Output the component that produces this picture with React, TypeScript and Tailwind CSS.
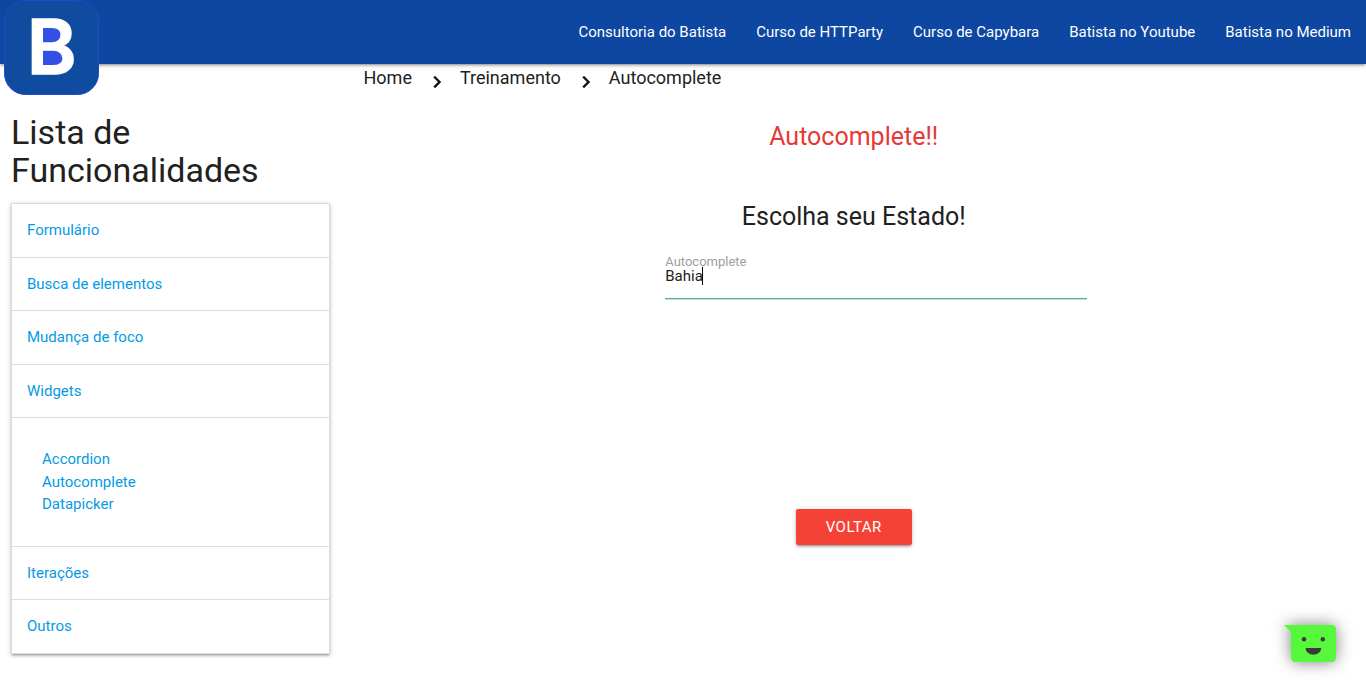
const navLinks = [
  "Consultoria do Batista",
  "Curso de HTTParty",
  "Curso de Capybara",
  "Batista no Youtube",
  "Batista no Medium",
];

const crumbs = ["Home", "Treinamento", "Autocomplete"];

type Section = { title: string; items?: string[] };

const sections: Section[] = [
  { title: "Formulário" },
  { title: "Busca de elementos" },
  { title: "Mudança de foco" },
  { title: "Widgets", items: ["Accordion", "Autocomplete", "Datapicker"] },
  { title: "Iterações" },
  { title: "Outros" },
];

function Logo() {
  return (
    <svg width="96" height="96" viewBox="0 0 96 96" role="img" aria-label="Batista">
      <rect x="0.5" y="0.5" width="94" height="94" rx="21" fill="#0f4c9f" stroke="#2448c8" strokeWidth="1" />
      <rect x="36" y="26" width="26" height="42" fill="#3350e4" />
      <text
        x="23"
        y="74"
        fontFamily="Inter, sans-serif"
        fontWeight="600"
        fontSize="75"
        fill="#ffffff"
        stroke="#ffffff"
        strokeWidth="1.500"
      >
        B
      </text>
    </svg>
  );
}

function Chevron() {
  return (
    <svg className="mt-1.5 mr-[11px] ml-[13px] shrink-0" width="24" height="24" viewBox="0 0 24 24" aria-hidden="true">
      <path d="M10 6L8.59 7.41 13.17 12l-4.58 4.59L10 18l6-6z" fill="#111" stroke="#111" strokeWidth="0.4" />
    </svg>
  );
}

function Header() {
  return (
    <header className="relative z-10 h-16 bg-[#0d47a1] shadow-[0_2px_2px_0_rgba(0,0,0,0.14),0_3px_1px_-2px_rgba(0,0,0,0.12),0_1px_5px_0_rgba(0,0,0,0.2)]">
      <a href="#" className="absolute top-0 left-1">
        <Logo />
      </a>
      <nav className="flex h-full items-center justify-end">
        {navLinks.map((link) => (
          <a key={link} href="#" className="px-[15px] text-white">
            {link}
          </a>
        ))}
      </nav>
    </header>
  );
}

function Sidebar() {
  return (
    <aside className="w-1/4 pt-[49px] pr-3 pl-[11px]">
      <h4 className="text-[34px] leading-[38px]">Lista de Funcionalidades</h4>
      <ul className="mt-[14px] border border-b-0 border-[#ddd] shadow-[0_2px_2px_0_rgba(0,0,0,0.14),0_3px_1px_-2px_rgba(0,0,0,0.12),0_1px_5px_0_rgba(0,0,0,0.2)]">
        {sections.map((section) => (
          <li key={section.title} className="text-[#039be5]">
            <div className="border-b border-[#ddd] p-[15px]">
              <a href="#">{section.title}</a>
            </div>
            {section.items && (
              <ul className="border-b border-[#ddd] p-[30px]">
                {section.items.map((item) => (
                  <li key={item}>
                    <a href="#">{item}</a>
                  </li>
                ))}
              </ul>
            )}
          </li>
        ))}
      </ul>
    </aside>
  );
}

function StateField() {
  return (
    <div className="relative mt-[23px] ml-[31.6%] flex w-[41.2%] flex-col">
      <label htmlFor="estado" className="text-[13px] leading-4 text-[#9e9e9e]">
        Autocomplete
      </label>
      <input
        id="estado"
        type="text"
        autoComplete="off"
        defaultValue="Bahia"
        className="-mt-1 h-[33px] border-b border-[#5fa8a0] bg-transparent pb-[13px] text-[15px] caret-transparent shadow-[0_1px_0_0_#c5e0dc] outline-none"
      />
      <span aria-hidden="true" className="absolute top-[13px] left-[37px] h-[18px] w-px bg-black" />
    </div>
  );
}

function Chat() {
  return (
    <button type="button" aria-label="Chat" className="fixed right-6 bottom-6">
      <svg width="64" height="54" viewBox="0 0 64 54" className="overflow-visible drop-shadow-[0_0_8px_rgba(0,0,0,0.5)]">
        <path d="M6 9H53Q58 9 58 14V41Q58 46 53 46H18Q13 46 13 41V16Z" fill="#57f73c" />
        <circle cx="26" cy="23.300" r="2.200" fill="#3a3a3a" />
        <circle cx="44.800" cy="23.300" r="2.200" fill="#3a3a3a" />
        <path d="M27.600 32H43.200A7.800 6.800 0 0 1 27.600 32Z" fill="#3a3a3a" />
      </svg>
    </button>
  );
}

export default function App() {
  return (
    <div className="min-h-screen bg-white font-[Roboto,sans-serif] text-[15px] leading-normal text-[#212121]">
      <Header />
      <div className="flex">
        <Sidebar />
        <main className="w-3/4">
          <nav aria-label="breadcrumb" className="flex h-[30px] items-start pl-[22px] text-[18px] leading-7">
            {crumbs.map((crumb, index) => (
              <div key={crumb} className="flex">
                {index > 0 && <Chevron />}
                <a href="#">{crumb}</a>
              </div>
            ))}
          </nav>
          <h5 className="mt-[29px] text-center text-[25px] leading-7 text-[#e53935]">Autocomplete!!</h5>
          <h5 className="mt-[52px] text-center text-[25px] leading-7">Escolha seu Estado!</h5>
          <StateField />
          <div className="mt-[210px] flex justify-center">
            <button
              type="button"
              className="h-9 rounded-[2px] bg-[#f44336] px-[30px] tracking-[0.5px] text-white uppercase shadow-[0_2px_2px_0_rgba(0,0,0,0.14),0_3px_1px_-2px_rgba(0,0,0,0.12),0_1px_5px_0_rgba(0,0,0,0.2)]"
            >
              Voltar
            </button>
          </div>
        </main>
      </div>
      <Chat />
    </div>
  );
}
